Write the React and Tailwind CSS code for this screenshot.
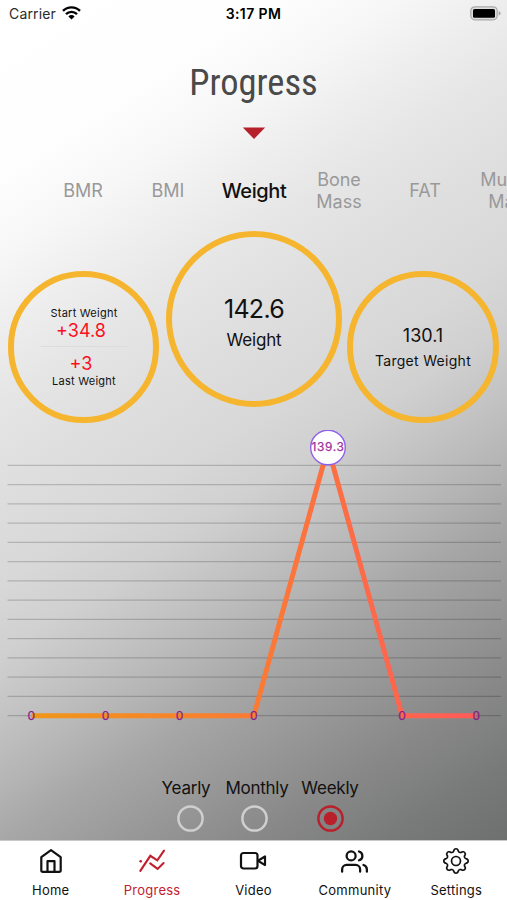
import { useState } from "react";
import { BsGear } from "react-icons/bs";
import { FiUsers } from "react-icons/fi";

const weekly = [0, 0, 0, 0, 139.3, 0, 0];

const GRID_TOP = 35.3;
const GRID_STEP = 19.25;
const BASE_Y = 285.5;

function pointX(i) {
    return 31.3 + i * 74.17;
}

function StatusBar() {

    return (

        <div className="h-[26px] px-[9px] grid grid-cols-3 items-center text-black">

            <div className="flex items-center gap-[6px]">

                <span className="text-[14px] tracking-[0.15px] text-[#2a2a2a]">Carrier</span>

                <svg width="19" height="14" viewBox="0 0 19 14" fill="none" stroke="#000" strokeWidth="2.4">
                    <path d="M1 4.9a12 12 0 0 1 17 0" />
                    <path d="M4 8.1a7.8 7.8 0 0 1 11 0" />
                    <path d="M9.5 13.6 6.4 10.4a4.4 4.4 0 0 1 6.2 0z" fill="#000" stroke="none" />
                </svg>

            </div>

            <span className="text-center text-[14px] font-semibold tracking-[0.4px]">3:17 PM</span>

            <svg className="justify-self-end -mr-[3px]" width="31" height="15" viewBox="0 0 31 15">
                <rect x="0.8" y="0.8" width="26.4" height="13" rx="4" fill="#dedede" stroke="#a9a9a9" strokeWidth="1.2" />
                <rect x="3" y="3" width="22" height="8.8" rx="1.6" fill="#000" />
                <path d="M28.6 5v4.6q2-.6 2-2.3t-2-2.3" fill="#a9a9a9" />
            </svg>

        </div>

    );

}

function MetricTabs() {

    return (

        <div className="h-[48px] w-[560px] pt-[2px] flex items-center text-[18px] leading-[22px] text-center text-[#999]">

            <span className="w-[42px] ml-[62px]">BMR</span>
            <span className="w-[40px] ml-[44px]">BMI</span>
            <span className="w-[70px] ml-[31px] text-[20px] font-medium tracking-[-0.4px] text-[#111]">Weight</span>
            <span className="w-[50px] ml-[25px]">Bone Mass</span>
            <span className="w-[40px] ml-[41px]">FAT</span>
            <span className="w-[70px] ml-[31px]">Muscle Mass</span>

        </div>

    );

}

function Circles() {

    return (

        <div className="h-[192px] pl-[8px] flex items-end text-[#111]">

            <div className="w-[151px] h-[152px] shrink-0 rounded-full border-[6px] border-[#f6b52e] flex flex-col items-center pt-[29px]">
                <span className="pl-px text-[11px] leading-[14px] tracking-[0.25px]">Start Weight</span>
                <span className="pr-[5px] text-[18px] leading-[22px] text-[#fb0f1b]">+34.8</span>
                <span className="w-[86px] h-px mt-[4px] bg-[#dcdcdc]"></span>
                <span className="mt-[6px] pr-[5px] text-[18px] leading-[22px] text-[#fb0f1b]">+3</span>
                <span className="-mt-px pl-px text-[11px] leading-[14px] tracking-[0.25px]">Last Weight</span>
            </div>

            <div className="w-[176px] h-[176px] ml-[7px] mb-[16px] shrink-0 rounded-full border-[6px] border-[#f6b52e] flex flex-col items-center pt-[57px]">
                <span className="text-[25px] leading-[30px] tracking-[-0.7px]">142.6</span>
                <span className="mt-[5px] text-[17px] leading-[22px] tracking-[-0.15px]">Weight</span>
            </div>

            <div className="w-[152px] h-[152px] ml-[5px] shrink-0 rounded-full border-[6px] border-[#f6b52e] flex flex-col items-center pt-[48px]">
                <span className="text-[18px] leading-[22px]">130.1</span>
                <span className="mt-[5px] text-[14px] leading-[18px] tracking-[0.3px]">Target Weight</span>
            </div>

        </div>

    );

}

function Chart() {

    const peakY = 17.5;
    const points = weekly
        .map((v, i) => `${pointX(i)},${v > 0 ? peakY : BASE_Y + 0.3}`)
        .join(" ");

    return (

        <svg className="block font-['Inter',sans-serif]" width="507" height="340" viewBox="0 0 507 340">

            <defs>
                <linearGradient id="line" gradientUnits="userSpaceOnUse" x1="31" y1="0" x2="477" y2="0">
                    <stop offset="0" stopColor="#f09619" />
                    <stop offset="0.5" stopColor="#fa7b34" />
                    <stop offset="0.75" stopColor="#fd6a4a" />
                    <stop offset="1" stopColor="#ff5b58" />
                </linearGradient>
            </defs>

            {Array.from({ length: 14 }, (_, i) => (
                <line
                    key={i}
                    x1="7.5"
                    x2="501"
                    y1={GRID_TOP + i * GRID_STEP}
                    y2={GRID_TOP + i * GRID_STEP}
                    stroke="#000"
                    strokeOpacity="0.18"
                    strokeWidth="1.2"
                />
            ))}

            <polyline points={points} fill="none" stroke="url(#line)" strokeWidth="5" strokeLinejoin="bevel" />

            <circle cx={pointX(4)} cy={peakY} r="17.3" fill="#fff" stroke="#9160ea" strokeWidth="1.4" />

            {weekly.map((v, i) => (
                <text
                    key={i}
                    x={pointX(i)}
                    y={v > 0 ? 21.2 : 289.8}
                    textAnchor="middle"
                    fontSize="12"
                    letterSpacing={v > 0 ? 0.6 : 0}
                    fill={v > 0 ? "#a3309c" : "#8b1f87"}
                    stroke={v > 0 ? "#a3309c" : "#8b1f87"}
                    strokeWidth="0.25"
                >
                    {v}
                </text>
            ))}

        </svg>

    );

}

function RangePicker() {

    const [range, setRange] = useState("Weekly");

    const options = [
        { name: "Yearly", box: "w-[48px]", dot: "ml-[9px]" },
        { name: "Monthly", box: "w-[64px] ml-[15px]", dot: "mr-[5px]" },
        { name: "Weekly", box: "w-[58px] ml-[12px]", dot: "" }
    ];

    return (

        <div className="flex h-[71px] pl-[162px] pt-[7px] text-[17px] leading-[22px] tracking-[-0.25px] text-[#111]">

            {options.map(option => (

                <button
                    key={option.name}
                    onClick={() => setRange(option.name)}
                    className={`${option.box} flex flex-col items-center`}
                >

                    <span className="whitespace-nowrap">{option.name}</span>

                    <svg
                        className={`${option.dot} mt-[6px] shrink-0 ${range === option.name ? "text-[#b9202b]" : "text-[#cfcfcf]"}`}
                        width="27"
                        height="27"
                        viewBox="0 0 27 27"
                    >
                        <circle cx="13.5" cy="13.5" r="12.1" fill="none" stroke="currentColor" strokeWidth="2.5" />
                        {range === option.name && <circle cx="13.5" cy="13.5" r="6.7" fill="currentColor" />}
                    </svg>

                </button>

            ))}

        </div>

    );

}

function HomeIcon() {

    return (
        <svg width="28" height="28" viewBox="0 0 28 28" fill="none" stroke="currentColor" strokeWidth="2.2" strokeLinejoin="round">
            <path d="M4.3 10.2 14 3.2l9.7 7v13q0 1.6-1.6 1.6H5.9q-1.6 0-1.6-1.6z" />
            <path d="M10.5 24.6V14.2h7v10.4" />
        </svg>
    );

}

function ProgressIcon() {

    return (
        <svg width="28" height="28" viewBox="0 0 28 28" fill="none" stroke="currentColor" strokeWidth="2.1" strokeLinecap="round">
            <path d="M2.3 23.8 12.3 8.8l7 4.6 6.7-9.8" />
            <path d="M12.2 16.3l7.4 5.6 6-5.8" />
            <path d="M2.6 14.2h.2" strokeWidth="2.4" />
        </svg>
    );

}

function VideoIcon() {

    return (
        <svg width="28" height="28" viewBox="0 0 28 28" fill="none" stroke="currentColor" strokeWidth="2.2" strokeLinejoin="round">
            <rect x="2" y="6" width="16.5" height="15.5" rx="2.5" />
            <path d="M19 13.8l7-4.3v8.6z" />
        </svg>
    );

}

function TabBar() {

    const tabs = [
        { name: "Home", icon: <HomeIcon /> },
        { name: "Progress", icon: <ProgressIcon /> },
        { name: "Video", icon: <VideoIcon /> },
        { name: "Community", icon: <FiUsers size={27} /> },
        { name: "Settings", icon: <BsGear size={26} strokeWidth={0.05} /> }
    ];

    return (

        <nav className="h-[60px] border-t border-[#c8c8c8] bg-white grid grid-cols-5">

            {tabs.map(tab => (

                <div
                    key={tab.name}
                    className={`flex flex-col items-center pt-[6px] ${tab.name === "Progress" ? "text-[#c2202f]" : "text-[#111]"}`}
                >
                    <span className="h-7 flex items-center">{tab.icon}</span>
                    <span className="mt-[6px] text-[13px] leading-[18px] tracking-[0.25px]">{tab.name}</span>
                </div>

            ))}

        </nav>

    );

}

function App() {

    return (

        <div className="w-[507px] h-[900px] overflow-hidden flex flex-col font-['Inter',sans-serif]">

            <main className="h-[840px] overflow-hidden bg-[linear-gradient(147deg,#fff_0%,#fefefe_15%,#f7f7f7_22%,#eeeeee_28%,#e6e6e6_34%,#dfdfdf_41%,#d8d8d8_50%,#d0d0d0_56%,#c2c2c2_62%,#b4b4b4_67.5%,#a7a7a7_72%,#9c9c9c_77%,#888888_86%,#797b7a_93%,#6c706f_100%)]">

                <StatusBar />

                <h1 className="h-[101px] pt-[35px] text-center font-['Roboto',sans-serif] text-[36.5px] leading-[44px] text-[#4a4a4a] font-stretch-75%">
                    Progress
                </h1>

                <div className="h-[39px] flex justify-center">
                    <svg width="24" height="13" viewBox="0 0 24 13">
                        <path d="M.8.4h22.4L12 12z" fill="#b5202b" />
                    </svg>
                </div>

                <MetricTabs />

                <div className="pt-[17px]">
                    <Circles />
                </div>

                <div className="mt-[7px]">
                    <Chart />
                </div>

                <RangePicker />

            </main>

            <TabBar />

        </div>

    );

}

export default App;
